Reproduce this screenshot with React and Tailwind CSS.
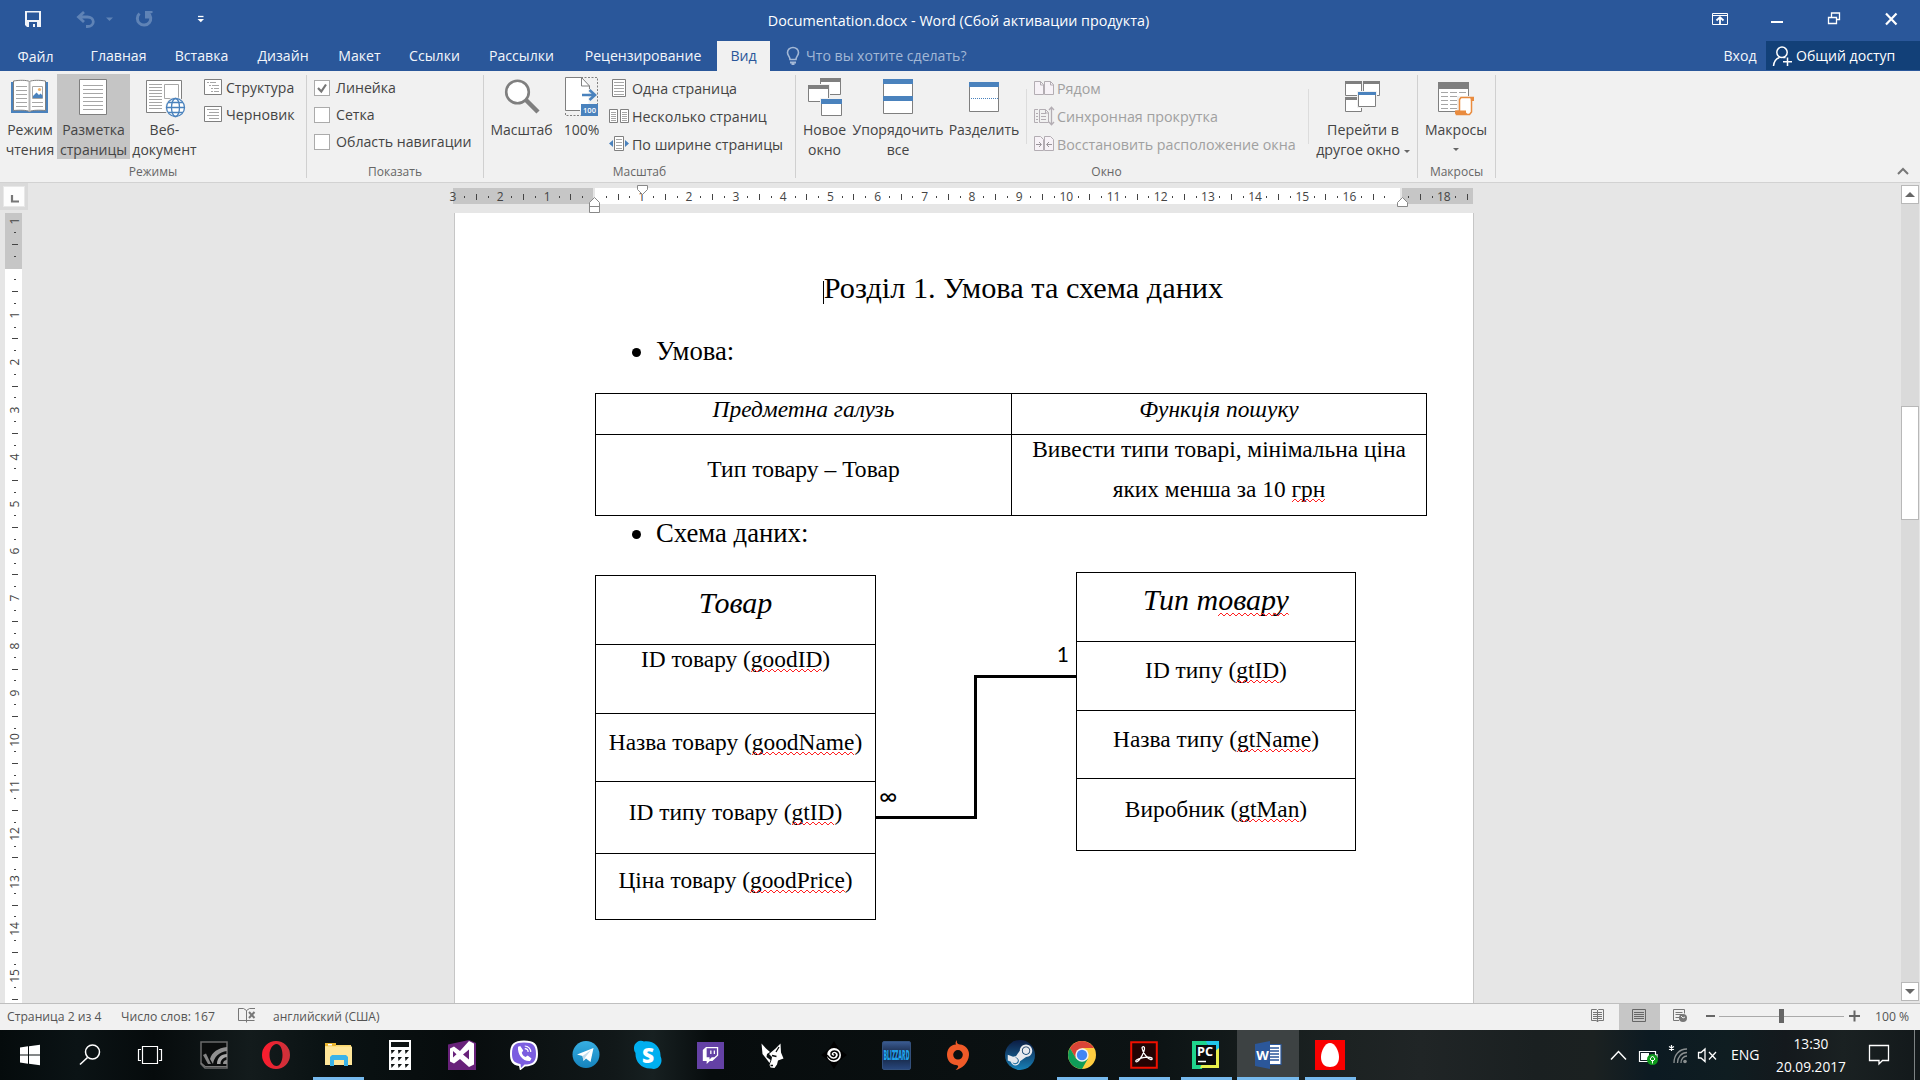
import React from 'react';
import { FaTwitch, FaSteamSymbol } from 'react-icons/fa';

/* ---------- shared helpers ---------- */

function Icon({ box, className = '', children }) {
  const [, , w, h] = box.split(' ');
  return (
    <svg width={w} height={h} viewBox={box} fill="none" className={`block shrink-0 ${className}`}>
      {children}
    </svg>
  );
}

const GRAY = '#7f7f7f';
const BLUE = '#4a82bd';

function Lines({ x1, x2, ys, color = '#a6a6a6' }) {
  return ys.map((y) => <path key={y} d={`M${x1} ${y}.5H${x2}`} stroke={color} />);
}

/* ---------- title bar ---------- */

function TitleBar() {
  return (
    <div className="flex h-[41px] items-stretch text-white">
      <div className="flex w-[759px] shrink-0">
        <Icon box="0 0 60 41">
          <path d="M25 11h16v16H27l-2-2z" fill="#f1f4f9" />
          <path d="M27 12.500h12v7.500H27z" fill="#2a579a" />
          <path d="M29 22h8v5h-2v-3h-2v3h-4z" fill="#2a579a" />
        </Icon>
        <Icon box="60 0 60 41">
          <path d="M84 12l-5.500 5 5.500 5M79 17h8.500a5.500 4.500 0 0 1 0 9.500H86" stroke="#5f83b6" strokeWidth="2.800" />
          <path d="M106 17.500h7l-3.500 3.500z" fill="#5f83b6" />
        </Icon>
        <Icon box="120 0 60 41">
          <path d="M139.500 13.500a6.700 6.700 0 1 0 8.500 -.5" stroke="#5f83b6" strokeWidth="3" />
          <path d="M145 11h7.500v2l-3 .5.500 5h-5z" fill="#5f83b6" />
        </Icon>
        <Icon box="180 0 40 41">
          <path d="M198 16.500h5.500" stroke="#fff" strokeWidth="1.300" />
          <path d="M197.500 19h6.500l-3.200 3.300z" fill="#fff" />
        </Icon>
      </div>
      <div className="w-[399px] shrink-0 whitespace-nowrap text-center text-[14.33px] leading-[41px]">
        Documentation.docx - Word (Сбой активации продукта)
      </div>
      <div className="ml-auto flex">
        <Icon box="1691 0 57 41">
          <path d="M1712.500 13.500h15v11h-15zM1712.500 15.500h15" stroke="#fff" />
          <path d="M1720 17v7M1716.500 20.500l3.500-3.300 3.500 3.300" stroke="#fff" strokeWidth="1.800" />
        </Icon>
        <Icon box="1748 0 57 41">
          <path d="M1771 22h12" stroke="#fff" strokeWidth="2" />
        </Icon>
        <Icon box="1805 0 57 41">
          <path d="M1828.500 17.500h8v6h-8zM1831.500 17v-4h8v6.500h-3M1831.500 13h8.500M1828.500 17.500h8.500" stroke="#fff" strokeWidth="1.300" />
        </Icon>
        <Icon box="1862 0 58 41">
          <path d="M1886 13.500l10.500 11M1896.500 13.500l-10.500 11" stroke="#fff" strokeWidth="2.200" />
        </Icon>
      </div>
    </div>
  );
}

/* ---------- tabs ---------- */

const TABS = [
  ['Главная', 'w-[85px]'],
  ['Вставка', 'w-[81px]'],
  ['Дизайн', 'w-[82px]'],
  ['Макет', 'w-[71px]'],
  ['Ссылки', 'w-[79px]'],
  ['Рассылки', 'w-[95px]'],
  ['Рецензирование', 'w-[148px]'],
];

function Tabs() {
  return (
    <div className="flex h-[30px] whitespace-nowrap text-center text-[14.1px] leading-[29px] text-[#f3f6fa]">
      <div className="mr-[5px] w-[71px] leading-[31px]">Файл</div>
      {TABS.map(([t, w]) => (
        <div key={t} className={w}>{t}</div>
      ))}
      <div className="w-[53px] bg-[#f1f1f1] text-[#2a579a]">Вид</div>
      <div className="flex pl-[14px] text-[#a3b8d6]">
        <Icon box="784 41 22 30">
          <path d="M790 59.500c0-3-2.500-3.800-2.500-7a5.500 5 0 0 1 11 0c0 3.200-2.500 4-2.500 7z" stroke="#a3b8d6" strokeWidth="1.600" />
          <path d="M790 61.500h6v2h-1.500v1.500h-3v-1.500h-1.500z" fill="#a3b8d6" />
        </Icon>
        <span>Что вы хотите сделать?</span>
      </div>
      <div className="ml-auto w-[52px]">Вход</div>
      <div className="flex h-[29px] w-[154px] bg-[#124078] text-white">
        <Icon box="1766 41 30 29">
          <circle cx="1782" cy="52.300" r="5.200" stroke="#fff" strokeWidth="1.500" />
          <path d="M1773.500 66c.5-5 3-7.500 6-8.500M1783 57.500h2.500M1787.500 57.500v8.500M1783 61.800h9" stroke="#fff" strokeWidth="1.500" />
        </Icon>
        <span>Общий доступ</span>
      </div>
    </div>
  );
}

/* ---------- ribbon ---------- */

function Group({ label, width, children }) {
  return (
    <div className={`flex shrink-0 ${width}`}>
      <div className="flex min-w-0 grow flex-col">
        <div className="flex h-[92px]">{children}</div>
        <div className="text-center text-[12px] leading-5 text-[#666]">{label}</div>
      </div>
      <div className="mt-1 h-[103px] w-px bg-[#d0d0d0]" />
    </div>
  );
}

function Big({ width, icon, lines, className = '' }) {
  return (
    <div className={`flex shrink-0 flex-col items-center whitespace-nowrap text-center leading-5 ${width} ${className}`}>
      {icon}
      <div className="mt-px">
        {lines.map((l, i) => (
          <div key={i}>{l}</div>
        ))}
      </div>
    </div>
  );
}

function Small({ icon, children, className = '' }) {
  return (
    <div className={`flex whitespace-nowrap ${className}`}>
      {icon}
      <span>{children}</span>
    </div>
  );
}

const Caret = () => (
  <svg width="6" height="3" viewBox="0 0 6 3" className="inline-block align-middle">
    <path d="M0 0h6L3 3z" fill="#666" />
  </svg>
);

function ReadIcon() {
  return (
    <Icon box="6 71 48 48">
      <path d="M11 82h37v31H11z" fill={BLUE} />
      <path d="M13.500 81c6-1 13-1 16 .5 3-1.500 10-1.500 16-.5v29.500c-6-.5-13-.5-16 1-3-1.500-10-1.500-16-1z" fill="#fff" stroke={GRAY} />
      <path d="M29.500 81.500v30" stroke="#b5b5b5" strokeWidth="2" />
      <Lines x1={16} x2={27} ys={[86, 90, 94, 98, 102, 106]} />
      <Lines x1={32} x2={43} ys={[102, 106]} />
      <path d="M32.500 86.500h10v12h-10z" fill="#fff" stroke="#a6a6a6" />
      <path d="M33 98v-2l3.500-3.500 2.500 2.500 1.500-1.500 2 2V98z" fill={BLUE} />
      <circle cx="39.500" cy="89.500" r="1.600" fill="#f0b26b" />
    </Icon>
  );
}

function PageIcon() {
  return (
    <Icon box="70 71 47 48">
      <path d="M79.500 79.500h27v35h-27z" fill="#fff" stroke={GRAY} />
      <Lines x1={83} x2={103} ys={[85, 89, 93, 97, 101, 105, 109]} />
    </Icon>
  );
}

function WebIcon() {
  return (
    <Icon box="141 71 47 48">
      <path d="M146.500 80.500h35v32h-35z" fill="#fff" stroke={GRAY} />
      <Lines x1={149} x2={162} ys={[84, 87, 90, 93, 96, 99, 102, 105, 108]} />
      <path d="M164.500 84.500h14v14h-14z" fill="#fff" stroke="#a6a6a6" />
      <circle cx="175.500" cy="107.500" r="10.500" fill="#f1f1f1" />
      <g stroke={BLUE} strokeWidth="1.300">
        <circle cx="175.500" cy="107.500" r="9" fill="#fff" />
        <ellipse cx="175.500" cy="107.500" rx="4" ry="9" />
        <path d="M166.500 107.500h18M168 102.500h15M168 112.500h15" />
      </g>
    </Icon>
  );
}

function MagnifierIcon() {
  return (
    <Icon box="498 71 47 48">
      <path d="M526 100l12 12" stroke={GRAY} strokeWidth="4.500" />
      <circle cx="517.500" cy="92" r="11.300" fill="#fff" stroke={GRAY} strokeWidth="2.600" />
    </Icon>
  );
}

function HundredIcon() {
  return (
    <Icon box="559 71 45 48">
      <path d="M581 77.500h16.500V104M565.500 113v2.500H581" stroke={GRAY} strokeDasharray="2 1.500" />
      <path d="M565.500 77.500h16l7 8v25h-23z" fill="#fff" />
      <path d="M580 110.500h-14.500v-33h16l8 8.500v3M581.500 77.500v8.500h8" stroke={GRAY} />
      <path d="M582 95h12M589.500 90l5.500 5-5.500 5" stroke={BLUE} strokeWidth="2.600" />
      <path d="M581 104h17v12h-17z" fill={BLUE} />
      <text x="589.500" y="112.700" textAnchor="middle" fontSize="7.500" fontWeight="600" fill="#fff">100</text>
    </Icon>
  );
}

function Win({ x, y, w, h, c = GRAY, bar = 3 }) {
  return (
    <g>
      <path d={`M${x - 1} ${y - 1}h${w + 2}v${h + 2}h${-w - 2}z`} fill="#f1f1f1" />
      <path d={`M${x + 0.5} ${y + 0.5}h${w - 1}v${h - 1}h${1 - w}z`} fill="#fff" stroke={GRAY} />
      <path d={`M${x} ${y}h${w}v${bar}h${-w}z`} fill={c} />
    </g>
  );
}

const NewWindowIcon = () => (
  <Icon box="801 71 47 48">
    <Win x={820} y={78} w={21} h={17} bar={4} />
    <Win x={808} y={85} w={21} h={17} bar={4} />
    <Win x={821} y={99} w={21} h={17} c={BLUE} bar={5} />
  </Icon>
);

const ArrangeIcon = () => (
  <Icon box="874 71 48 48">
    <Win x={883} y={79} w={30} h={18} c={BLUE} bar={5} />
    <path d="M883.500 97v16.500h29V97" fill="#fff" stroke={GRAY} />
    <path d="M883 96h30v5h-30z" fill={BLUE} />
  </Icon>
);

const SplitIcon = () => (
  <Icon box="960 71 48 48">
    <Win x={969} y={82} w={30} h={30} c={BLUE} bar={5} />
    <path d="M971 98.500h27" stroke={BLUE} strokeDasharray="1 1" />
  </Icon>
);

const SwitchIcon = () => (
  <Icon box="1339 71 48 48">
    <Win x={1345} y={81} w={17} h={15} />
    <Win x={1363} y={81} w={17} h={15} />
    <Win x={1345} y={97} w={17} h={15} />
    <Win x={1358} y={92} w={18} h={15} c={BLUE} />
  </Icon>
);

const MacroIcon = () => (
  <Icon box="1433 71 47 48">
    <Win x={1438} y={82} w={31} h={30} bar={7} />
    <g stroke="#a6a6a6">
      {[92, 96, 100, 104, 108].map((y) => (
        <path key={y} d={`M1441 ${y}.5h7M1450 ${y}.5h7M1459 ${y}.5h7`} />
      ))}
    </g>
    <path d="M1457 96h18v20h-20v-6h2z" fill="#f1f1f1" />
    <path d="M1459.500 111V99.500l1.500-2h12l-1.500 3V112l-2 2.500h-13v-3z" fill="#fff" stroke="#e98b3e" strokeWidth="1.500" />
    <path d="M1455 110.500h11v2l2.500 2.500h-12l-1.500-1.500zM1470 97h4v4h-3z" fill="#e98b3e" />
  </Icon>
);

function OutlineIcon({ draft }) {
  return (
    <Icon box="204 73 22 27">
      <path d="M204.500 79.500h17v15h-17z" fill="#fff" stroke={GRAY} />
      {draft ? (
        <g>
          <Lines x1={207} x2={219} ys={[82, 88]} />
          <Lines x1={209} x2={219} ys={[85, 91]} />
        </g>
      ) : (
        <path d="M207 82.500h2M210 82.500h6M209 85.500h2M212 85.500h7M211 88.500h2M214 88.500h5M211 91.500h2M214 91.500h5" stroke="#a6a6a6" />
      )}
    </Icon>
  );
}

function Check({ on, children }) {
  return (
    <div className="flex items-center whitespace-nowrap text-[14.15px] leading-[27px]">
      <div className="mr-1.5 h-4 w-4 border border-[#ababab] bg-white">
        {on && (
          <svg width="14" height="14" viewBox="0 0 14 14" fill="none" className="block">
            <path d="M3 7l3.300 3.500L11 3.500" stroke="#777" strokeWidth="2.200" />
          </svg>
        )}
      </div>
      <span>{children}</span>
    </div>
  );
}

const OnePageIcon = () => (
  <Icon box="609 74 23 28">
    <path d="M612.500 79.500h13v17h-13z" fill="#fff" stroke={GRAY} />
    <Lines x1={614} x2={624} ys={[82, 85, 88, 91, 94]} />
  </Icon>
);
const MultiPageIcon = () => (
  <Icon box="609 102 23 28">
    <path d="M609.500 109.500h8v13h-8zM620.500 109.500h8v13h-8z" fill="#fff" stroke={GRAY} />
    <Lines x1={611} x2={616} ys={[112, 114, 116, 118, 120]} />
    <Lines x1={622} x2={627} ys={[112, 114, 116, 118, 120]} />
  </Icon>
);
const WidthIcon = () => (
  <Icon box="609 130 23 28">
    <path d="M614.500 136.500h9v14h-9z" fill="#fff" stroke={GRAY} />
    <Lines x1={616} x2={622} ys={[139, 142, 145, 148]} />
    <path d="M609 143.500l4-3.500v7zM629 143.500l-4-3.500v7z" fill={BLUE} />
  </Icon>
);
const DIM = '#b3adb3';
const SideIcon = () => (
  <Icon box="1034 74 23 28">
    <path d="M1034.500 81.500h6l3 3v10h-9zM1044.500 81.500h6l3 3v10h-9z" fill="#f7f2f7" stroke={DIM} />
    <path d="M1040.500 81.500v3.500h3M1050.500 81.500v3.500h3" stroke={DIM} />
  </Icon>
);
const SyncIcon = () => (
  <Icon box="1034 102 23 28">
    <path d="M1038 109.500h-3.500v13h3.500M1039.500 109.500h6l3 3v10h-9zM1045.500 109.500v3.500h3" stroke={DIM} />
    <Lines x1={1036} x2={1038} ys={[113, 116, 119]} color={DIM} />
    <Lines x1={1041} x2={1046} ys={[113, 116, 119]} color={DIM} />
    <path d="M1051.500 107.500v17M1049 110l2.500-2.700 2.500 2.700M1049 122l2.500 2.700 2.500-2.700" stroke={DIM} strokeWidth="1.300" />
  </Icon>
);
const ResetIcon = () => (
  <Icon box="1034 130 23 28">
    <path d="M1034.500 136.500h6l3 3v11h-9zM1044.500 136.500h6l3 3v11h-9z" fill="#f7f2f7" stroke={DIM} />
    <path d="M1036 144.500h5M1039 142l2.500 2.500-2.500 2.500M1052 144.500h-5M1049 142l-2.500 2.500 2.500 2.500" stroke="#9a959a" />
  </Icon>
);

function Ribbon() {
  return (
    <div className="flex h-[112px] border-b border-[#d2d2d2] bg-[#f1f1f1] text-[14px] text-[#444]">
      <Group label="Режимы" width="w-[307px]">
        <Big width="w-[57px]" className="pl-[3px]" icon={<ReadIcon />} lines={['Режим', 'чтения']} />
        <div className="mt-[3px] h-[85px] w-[73px] bg-[#c5c5c5]">
          <Big width="w-[73px]" className="-mt-[3px]" icon={<PageIcon />} lines={['Разметка', 'страницы']} />
        </div>
        <Big width="w-[69px]" icon={<WebIcon />} lines={['Веб-', 'документ']} />
        <div className="pl-[5px] pt-[2px] leading-[29px]">
          <Small className="h-[27px]" icon={<OutlineIcon />}>Структура</Small>
          <Small className="h-[27px] text-[14.2px]" icon={<OutlineIcon draft />}>Черновик</Small>
        </div>
      </Group>

      <Group label="Показать" width="w-[177px]">
        <div className="pl-[7px] pt-[3px]">
          <Check on>Линейка</Check>
          <Check>Сетка</Check>
          <Check>Область навигации</Check>
        </div>
      </Group>

      <Group label="Масштаб" width="w-[312px]">
        <Big width="w-[75px]" icon={<MagnifierIcon />} lines={['Масштаб']} />
        <Big width="w-[45px]" icon={<HundredIcon />} lines={['100%']} />
        <div className="pl-[5px] pt-[3px] text-[14.25px] leading-[29px]">
          <Small className="h-7" icon={<OnePageIcon />}>Одна страница</Small>
          <Small className="h-7" icon={<MultiPageIcon />}>Несколько страниц</Small>
          <Small className="h-7" icon={<WidthIcon />}>По ширине страницы</Small>
        </div>
      </Group>

      <Group label="Окно" width="w-[622px]">
        <Big width="w-[55px]" className="ml-px" icon={<NewWindowIcon />} lines={['Новое', 'окно']} />
        <Big width="w-[92px]" icon={<ArrangeIcon />} lines={['Упорядочить', 'все']} />
        <Big width="w-[80px]" icon={<SplitIcon />} lines={['Разделить']} />
        <div className="ml-[2px] mt-[18px] h-[55px] w-px bg-[#dcdcdc]" />
        <div className="pl-[7px] pt-[3px] text-[14.27px] leading-[29px] text-[#a0a0a0]">
          <Small className="h-7" icon={<SideIcon />}>Рядом</Small>
          <Small className="h-7" icon={<SyncIcon />}>Синхронная прокрутка</Small>
          <Small className="h-7" icon={<ResetIcon />}>Восстановить расположение окна</Small>
        </div>
        <div className="ml-auto mt-[18px] h-[55px] w-px bg-[#dcdcdc]" />
        <Big
          width="w-[108px]"
          className="text-[14.25px]"
          icon={<SwitchIcon />}
          lines={['Перейти в', <span key="o">другое окно <Caret /></span>]}
        />
      </Group>

      <Group label="Макросы" width="w-[78px]">
        <Big width="w-[76px]" icon={<MacroIcon />} lines={['Макросы', <div key="c" className="-mt-[2px]"><Caret /></div>]} />
      </Group>

      <svg width="12" height="8" viewBox="0 0 12 8" fill="none" className="ml-auto mr-[11px] mt-[96px]">
        <path d="M1 7l5-5 5 5" stroke="#777" strokeWidth="2" />
      </svg>
    </div>
  );
}

/* ---------- rulers ---------- */

function HCells({ from, to }) {
  const out = [];
  for (let n = from; n <= to; n++) {
    out.push(
      <div key={n} className="grid w-[47.2px] shrink-0 grid-cols-4 items-center justify-items-center">
        <span className="flex w-0 justify-center">{n === 0 || n === 17 ? '' : Math.abs(n)}</span>
        <i className="h-[2px] w-px bg-[#444]" />
        <i className="h-[6px] w-px bg-[#444]" />
        <i className="h-[2px] w-px bg-[#444]" />
      </div>
    );
  }
  return out;
}

function HRuler() {
  return (
    <div className="relative ml-[430px] mt-[5px] h-4 w-[1020px]">
      <div className="flex h-4">
        <div className="w-[140px] bg-[#c6c6c6]" />
        <div className="ml-[2px] w-[805px] bg-white" />
        <div className="ml-[2px] grow bg-[#c6c6c6]" />
      </div>
      <div className="absolute -left-[6px] top-0 flex h-[17px] w-[1026px] overflow-hidden text-[12px] leading-[17px] text-[#444]">
        <HCells from={-3} to={18} />
      </div>
      <svg width="12" height="12" viewBox="0 0 12 12" className="absolute left-[184px] -top-[4px]">
        <path d="M.5 1.500h10v4l-5 5-5-5z" fill="#fff" stroke="#888" />
      </svg>
      <svg width="12" height="17" viewBox="0 0 12 17" className="absolute left-[136px] top-[9px]">
        <path d="M.5 5.500l5-5 5 5v10H.5zM.5 9.500h10" fill="#fff" stroke="#888" />
      </svg>
      <svg width="12" height="11" viewBox="0 0 12 11" className="absolute left-[944px] top-[9px]">
        <path d="M.5 5.500l5-5 5 5v4H.5z" fill="#fff" stroke="#888" />
      </svg>
    </div>
  );
}

function VRuler() {
  const ns = Array.from({ length: 17 }, (_, i) => i - 1);
  return (
    <div className="relative ml-[5px] h-[790px] w-[17px] overflow-hidden bg-white">
      <div className="h-14 bg-[#c6c6c6]" />
      <div className="absolute left-0 top-[2px] w-[19px] text-[12px] text-[#444]">
        {ns.map((n) => (
          <div key={n} className="grid h-[47.2px] grid-rows-4 items-center justify-items-center">
            <span className="flex h-0 w-0 -rotate-90 items-center justify-center">{n === 0 ? '' : Math.abs(n)}</span>
            <i className="h-px w-[2px] bg-[#444]" />
            <i className="h-px w-[6px] bg-[#444]" />
            <i className="h-px w-[2px] bg-[#444]" />
          </div>
        ))}
      </div>
    </div>
  );
}

/* ---------- document ---------- */

/* A word with a red zigzag under it. */
function Err({ children }) {
  const id = React.useId();
  return (
    <span className="relative inline-block leading-none">
      {children}
      <svg height="5" className="absolute -bottom-[2px] left-0 w-full">
        <defs>
          <pattern id={id} width="6" height="5" patternUnits="userSpaceOnUse">
            <path d="M0 4l3-3 3 3" fill="none" stroke="#f22" />
          </pattern>
        </defs>
        <rect width="100%" height="5" fill={`url(#${id})`} />
      </svg>
    </span>
  );
}

function Entity({ className, rows }) {
  return (
    <div className={`shrink-0 border-x border-t border-black text-center ${className}`}>
      {rows.map(([cls, body], i) => (
        <div key={i} className={`whitespace-nowrap border-b border-black ${cls}`}>{body}</div>
      ))}
    </div>
  );
}

function Bullet({ children, className }) {
  return (
    <div className={`flex items-center pl-[37px] text-[26.7px] ${className}`}>
      <span className="mr-[15px] mt-0.5 h-[9px] w-[9px] rounded-full bg-black" />
      {children}
    </div>
  );
}

function Page() {
  return (
    <div className="ml-[431px] h-[790px] w-[1020px] border-x border-[#c6c6c6] bg-white pl-[140px] pt-[55px] font-['Liberation_Serif',serif] text-[23.4px] text-black">
      <div className="relative ml-12 w-[761px] text-center text-[30.3px] leading-10">
        <span className="absolute left-[180px] top-[13px] h-[23px] w-px bg-black" />
        Розділ 1. Умова та схема даних
      </div>
      <Bullet className="mt-[20px] h-[46px]">Умова:</Bullet>

      <div className="mt-[19px] grid h-[123px] w-[832px] grid-cols-[416px_414px] grid-rows-[41px_80px] border border-black text-center">
        <div className="border-b border-r border-black italic leading-[31px]">Предметна галузь</div>
        <div className="border-b border-black italic leading-[31px]">Функція пошуку</div>
        <div className="border-r border-black text-[23.6px] leading-[68px]">Тип товару – Товар</div>
        <div className="whitespace-nowrap leading-10">
          <div className="-mt-1.5">Вивести типи товарі, мінімальна ціна</div>
          <div>яких менша за 10 <Err>грн</Err></div>
        </div>
      </div>
      <Bullet className="h-[34px]">Схема даних:</Bullet>

      <div className="flex">
        <Entity
          className="mt-[25px] w-[281px] self-start"
          rows={[
            ['h-[69px] text-[30px] italic leading-[53px]', 'Товар'],
            ['h-[69px] leading-[28px]', <>ID товару (<Err>goodID</Err>)</>],
            ['h-[68px] leading-[57px]', <>Назва товару (<Err>goodName</Err>)</>],
            ['h-[72px] leading-[60px]', <>ID типу товару (<Err>gtID</Err>)</>],
            ['h-[66px] leading-[52px]', <>Ціна товару (<Err>goodPrice</Err>)</>],
          ]}
        />
        <div className="relative w-[200px] shrink-0 font-[Lato,sans-serif] leading-6">
          <svg width="200" height="298" viewBox="0 2 200 298" fill="none" className="block">
            <path d="M0 269.500h99.500v-141H200" stroke="#000" strokeWidth="3" />
          </svg>
          <span className="absolute right-[7px] top-[92px] text-[21px]">1</span>
          <span className="absolute left-[3px] top-[233px] text-[25px]">∞</span>
        </div>
        <Entity
          className="mt-[22px] w-[280px] self-start"
          rows={[
            ['h-[69px] text-[30px] italic leading-[54px]', <>Тип т<Err>овару</Err></>],
            ['h-[69px] leading-[56px]', <>ID типу (<Err>gtID</Err>)</>],
            ['h-[68px] leading-[56px]', <>Назва типу (<Err>gtName</Err>)</>],
            ['h-[72px] leading-[60px]', <>Виробник (<Err>gtMan</Err>)</>],
          ]}
        />
      </div>
    </div>
  );
}

function ScrollBar() {
  return (
    <div className="ml-auto mr-px mt-[2px] flex h-[816px] w-[18px] flex-col bg-[#dadada]">
      <div className="grid h-[19px] place-items-center border border-[#b8b8b8] bg-white">
        <svg width="10" height="5" viewBox="0 0 10 5"><path d="M5 0l5 5H0z" fill="#666" /></svg>
      </div>
      <div className="mt-[202px] h-[114px] border border-[#b8b8b8] bg-white" />
      <div className="mt-auto grid h-[19px] place-items-center border border-[#b8b8b8] bg-white">
        <svg width="10" height="5" viewBox="0 0 10 5"><path d="M5 5l5-5H0z" fill="#666" /></svg>
      </div>
    </div>
  );
}

function Workspace() {
  return (
    <div className="flex h-[820px] bg-[#e6e6e6]">
      <div className="w-[23px] shrink-0">
        <div className="h-[27px] w-[28px] bg-[#dadada] pl-[3px] pt-[3px]">
          <div className="h-[21px] w-[22px] border border-[#e8e8e8] bg-[#fdfdfd]">
            <svg width="20" height="19" viewBox="0 0 20 19" fill="none">
              <path d="M8 8v6.500h7" stroke="#777" strokeWidth="2.200" />
            </svg>
          </div>
        </div>
        <div className="mt-[3px]"><VRuler /></div>
      </div>
      <div className="w-[1475px] shrink-0">
        <HRuler />
        <div className="mt-[9px]"><Page /></div>
      </div>
      <ScrollBar />
    </div>
  );
}

/* ---------- status bar ---------- */

function StatusBar() {
  return (
    <div className="flex h-[27px] whitespace-nowrap border-t border-[#bfbfbf] bg-[#f1f1f1] text-[12.2px] leading-[25px] text-[#555]">
      <span className="w-[114px] pl-[7px]">Страница 2 из 4</span>
      <span className="w-[124px] pl-[7px]">Число слов: 167</span>
      <Icon box="238 1004 35 26">
        <path d="M246.500 1020.500h-8v-12h5l3 2v12M246.500 1010.500l3-2h5.500M246.500 1020.500h8" stroke="#777" />
        <path d="M249 1012l5.500 6M254.500 1012l-5.500 6" stroke="#777" strokeWidth="2" />
      </Icon>
      <span className="text-[12px]">английский (США)</span>
      <div className="ml-auto flex">
        <Icon box="1577 1004 42 26">
          <path d="M1591.500 1009.500h5l1 1 1-1h5v11h-5l-1 1.500-1-1.500h-5zM1597.500 1010v12" stroke="#777" />
          <path d="M1593 1012.500h9M1593 1014.500h9M1593 1016.500h9M1593 1018.500h9" stroke="#777" />
        </Icon>
        <div className="w-[41px] bg-[#c6c6c6]">
          <Icon box="1619 1004 41 26">
            <path d="M1632.500 1009.500h13v12h-13z" stroke="#666" />
            <path d="M1634 1012.500h10M1634 1014.500h10M1634 1016.500h10M1634 1018.500h10" stroke="#666" />
          </Icon>
        </div>
        <Icon box="1660 1004 44 26">
          <path d="M1679 1020.500h-5.500v-11h11v4M1675.500 1012.500h7M1675.500 1014.500h7M1675.500 1017.500h4" stroke="#777" />
          <circle cx="1683" cy="1018" r="4" fill="#777" />
          <path d="M1681 1016l2 2 2-1" stroke="#eee" />
        </Icon>
        <Icon box="1704 1004 171 26">
          <path d="M1706 1016h9M1849 1016h11M1854.500 1010.500v11" stroke="#666" strokeWidth="2" />
          <path d="M1719 1016.500h125" stroke="#aaa" />
          <path d="M1779 1009h5v14h-5z" fill="#666" />
        </Icon>
        <span className="w-[45px]">100 %</span>
      </div>
    </div>
  );
}

/* ---------- taskbar ---------- */

const Nvidia = () => (
  <Icon box="0 0 30 30">
    <path d="M2 2h26v26H6l-4-4z" fill="#0b0d0d" stroke="#6b6b6b" strokeWidth="1.500" />
    <path d="M2 23l4 3.500h22" stroke="#777" strokeWidth="1.200" />
    <path d="M28 7C19 8 13 12 11 19l3 5c1-7 6-12 14-13z" fill="#8f8f8f" />
    <path d="M28 14c-6 0-10 4-10 10h3.500c0-4 2.500-6.500 6.500-7z" fill="#a5a5a5" />
    <path d="M24 24c0-2.500 1.500-4 4-4v4z" fill="#8f8f8f" />
    <path d="M4 15l3-1.500 5 10.500H9z" fill="#858585" />
  </Icon>
);
const Opera = () => (
  <Icon box="0 0 30 30">
    <defs>
      <linearGradient id="op" x1="0" x2="1"><stop stopColor="#ff1b2d" /><stop offset="1" stopColor="#c8333b" /></linearGradient>
    </defs>
    <path fillRule="evenodd" fill="url(#op)" d="M15 1a14 14 0 1 0 0 28 14 14 0 0 0 0-28zM15.500 4c3.800 0 6 5 6 11s-2.200 11-6 11-7-5-7-11 3.200-11 7-11z" />
  </Icon>
);
const Explorer = () => (
  <Icon box="0 0 30 30">
    <path d="M2 3h9l2 2h15v20H2z" fill="#f9d66c" />
    <path d="M2 6.500h27V25H2z" fill="#ffe699" />
    <path d="M2 3h11v3H2z" fill="#e9b52e" />
    <path d="M5 4h4v1.500H5z" fill="#fff" />
    <path d="M7 26V17l2-2h14l2 2v9h-4v-6h-10v6z" fill="#39b3e9" />
  </Icon>
);
const Calc = () => (
  <Icon box="0 0 30 30">
    <path d="M4 0h22v30H4z" fill="#fff" />
    <path d="M6 2h18v5H6z" fill="#101414" />
    {[10, 17, 24].map((y) => [6, 13, 20].map((x) => <path key={`${x}-${y}`} d={`M${x} ${y}h4l-3.500 4z`} fill="#101414" />))}
  </Icon>
);
const VStudio = () => (
  <Icon box="0 0 30 30">
    <path d="M1 4.500L22 0l7 3v27H1z" fill="#68217a" />
    <path fillRule="evenodd" fill="#fff" d="M22 1l5 2.500v21L22 27l-9-8-6 4.500-4-2v-13l4-2 6 4.500zM22 9.500l-6 5 6 5zM6 11v6.500l3.500-3.300z" />
  </Icon>
);
const Viber = () => (
  <Icon box="0 0 30 30">
    <path d="M15 .5c10 0 14 3 14 13.500 0 9-4 12-13 12.500l-5 4-1-4.500C3 25 1 21 1 14 1 4 5 .5 15 .5z" fill="#fff" />
    <path d="M15 2.500c9 0 12 2.500 12 11.500 0 8-3.500 10.500-11.500 10.500L12 28l-.5-4C5 23 3 20 3 14 3 5 6 2.500 15 2.500z" fill="#7b5de0" />
    <svg x="6" y="4.500" width="18" height="18" viewBox="0 0 24 24">
      <path d="M4 3l3-1 4 6-2 3c1 3 2.500 4.500 5 5.500l3-2 5 4-2 3.500c-9 1-17-8-16-19z" fill="#fff" />
      <path d="M13 2c5 0 8 4 8 8M13 5.500c3 0 4.500 2 4.500 4.500" fill="none" stroke="#fff" strokeWidth="1.600" />
    </svg>
  </Icon>
);
const Telegram = () => (
  <Icon box="0 0 30 30">
    <defs><linearGradient id="tg" x2="0" y2="1"><stop stopColor="#37aee2" /><stop offset="1" stopColor="#1583bd" /></linearGradient></defs>
    <circle cx="15" cy="14.500" r="13.500" fill="url(#tg)" />
    <path d="M6 14.500L22.500 8 19.500 22l-4.500-3.500-2.500 2.500-1-5z" fill="#fff" />
    <path d="M11.500 16L20 10l-5.500 7-2 4z" fill="#c3dcec" />
  </Icon>
);
const Skype = () => (
  <Icon box="0 0 30 30">
    <path d="M1 8a7 7 0 0 1 10-6.500C20 0 28 7 27.500 16 31 23 25 31 18 28.500 8 29 2 21 2.500 13A7 7 0 0 1 1 8z" fill="#00aff0" />
    <text x="15" y="22.500" textAnchor="middle" fontSize="21" fontWeight="800" fill="#fff">S</text>
  </Icon>
);
const Twitch = () => (
  <div className="grid h-[27px] w-[27px] place-items-center bg-[#6441a5] text-[17px] text-white"><FaTwitch /></div>
);
const Wolf = () => (
  <Icon box="0 0 30 30">
    <path d="M4.500 3.500l4.500 5 4 3.500-3 2-.5 3 4 3-1 3-3-4-4-5z" fill="#fff" />
    <path d="M23.500 3.500l.5 9 2.500 6-5.500 2-1 4-2.500 3.500-4-.5-1-2.500 2-5 .5-3-3-3 6-5z" fill="#fff" />
    <path d="M15 15.500l4.500 1M22 7l-3 5M13.500 25.500h2.500" stroke="#0a0d0d" strokeWidth="1.300" />
  </Icon>
);
const Spiral = () => (
  <Icon box="0 0 30 30">
    <path d="M15 1l5 8 8 6-8 6-5 8-5-8-8-6 8-6z" fill="#000" />
    <circle cx="15" cy="15" r="7" fill="#fff" />
    <path d="M8 15c3 3 3 5 7 4.500 5-.5 6-6 2.500-8-3-1.500-6 .5-5.500 3 .5 2 3 2.500 4 1 .5-1-.2-2-1.500-1.500" stroke="#000" strokeWidth="1.500" />
  </Icon>
);
const Blizzard = () => (
  <div className="grid h-[29px] w-[29px] place-items-center rounded-[2px] border border-[#33507c] bg-gradient-to-b from-[#3a5a90] via-[#14233f] to-[#28477c]">
    <svg width="27" height="24" viewBox="0 0 27 24">
      <text x="0.5" y="17" textLength="26" lengthAdjust="spacingAndGlyphs" fontSize="14" fontWeight="800" fill="#1fa3ec">BLIZZARD</text>
    </svg>
  </div>
);
const Origin = () => (
  <Icon box="0 0 30 30">
    <path fillRule="evenodd" fill="#f05a28" d="M14 0c-2 2-1.500 3.500-1 4.500C7 5 4 9.500 4 14.500 4 21 8 24.500 13 25c3 .5 3 2-.5 5 6-1 13-7 13.500-15C26.500 9 22 5 17 4.500c-3-.5-3.500-2-3-4.500zM15 10a4.800 4.800 0 1 1 0 9.600 4.800 4.800 0 0 1 0-9.600z" />
  </Icon>
);
const Steam = () => (
  <div className="grid h-[30px] w-[30px] place-items-center overflow-hidden rounded-full bg-gradient-to-b from-[#0b1c42] to-[#1682b8] text-[28px] text-[#e6e9ee]">
    <FaSteamSymbol />
  </div>
);
const Chrome = () => (
  <Icon box="0 0 30 30">
    <circle cx="15" cy="15" r="14" fill="#ffcd40" />
    <path d="M15 8h12.100A14 14 0 0 0 2.900 8L9 18.500z" fill="#db4437" />
    <path d="M2.900 8A14 14 0 0 0 15 29l6-10.500L15 21l-6-2.500z" fill="#0f9d58" />
    <circle cx="15" cy="15" r="6.700" fill="#f1f1f1" />
    <circle cx="15" cy="15" r="5.200" fill="#4285f4" />
  </Icon>
);
const Acrobat = () => (
  <Icon box="0 0 30 30">
    <path d="M2.200 2.200h25.600v25.600H2.200z" fill="#230303" stroke="#f01000" strokeWidth="2" />
    <path d="M13 8c0-2 3-2 2.500 1-.5 4-4 10-7 12.500-1.500 1-2.500-.5-1-1.500 3-2 10-3.500 14-2.500 2.500.5 2 2.500 0 2-3-1-7.500-6-8.500-11.500z" stroke="#fff" strokeWidth="1.300" />
  </Icon>
);
const PyCharm = () => (
  <Icon box="0 0 30 30">
    <path d="M1 1h16l-6 28H1z" fill="#1fd58d" />
    <path d="M15 1h13v10l-8 4z" fill="#21c6e8" />
    <path d="M28 8v20H9l4-8z" fill="#e9f04b" />
    <path d="M5 5h20v20H5z" fill="#0b0b0b" />
    <text x="6" y="16" fontSize="12" fontWeight="700" fill="#fff" textLength="16" lengthAdjust="spacingAndGlyphs">PC</text>
    <path d="M7 21.500h8" stroke="#fff" strokeWidth="1.500" />
  </Icon>
);
const WordIcon = () => (
  <Icon box="0 0 30 30">
    <path d="M15 4.500h13v20H15z" fill="#fff" stroke="#2b579a" strokeWidth="1.200" />
    <path d="M17 8h9M17 11h9M17 14h9M17 17h9M17 20h9" stroke="#2b579a" strokeWidth="1.300" />
    <path d="M2 4l15-3v28L2 26z" fill="#2b579a" />
    <text x="9.500" y="19.500" textAnchor="middle" fontSize="13" fontWeight="700" fill="#fff">W</text>
  </Icon>
);
const Egg = () => (
  <Icon box="0 0 30 30">
    <path d="M0 0h30v30H0z" fill="#fa0000" />
    <path d="M15 3c5 0 9 8 9 14 0 7-4 10-9 10s-9-3-9-10C6 11 10 3 15 3z" fill="#fff" />
  </Icon>
);

const APPS = [
  [Nvidia], [Opera], [Explorer, true], [Calc], [VStudio], [Viber], [Telegram], [Skype], [Twitch],
  [Wolf], [Spiral], [Blizzard], [Origin], [Steam], [Chrome, true], [Acrobat, true], [PyCharm, true],
  [WordIcon, true, true], [Egg, true],
];

function Taskbar() {
  return (
    <div className="flex h-[50px] bg-[linear-gradient(90deg,#050b0c_0%,#0b1315_4%,#060b0c_8%,#131b1c_13%,#0a1213_17%,#070c0d_24%,#111819_32%,#172021_34%,#070c0d_37%,#0a1011_50%,#0c1314_60%,#161d1d_66%,#1c2222_70%,#202526_74%,#1a2021_80%,#1b2121_83%,#0c1a22_86%,#0f1d21_90%,#14191d_93%,#1a2122_96%,#13191b_100%)]">
      <div className="flex w-[183px] shrink-0">
        <Icon box="0 1030 60 50">
          <path d="M20 1047.500l8-1.200v8.200h-8zM29 1046.200l11-1.500v9.800H29zM20 1055.500h8v8.200l-8-1.200zM29 1055.500h11v9.700l-11-1.500z" fill="#fff" />
        </Icon>
        <Icon box="60 1030 60 50">
          <circle cx="92.500" cy="1052" r="7" stroke="#fff" strokeWidth="1.500" />
          <path d="M87.500 1057.500l-7.500 7" stroke="#fff" strokeWidth="1.600" />
        </Icon>
        <Icon box="120 1030 60 50">
          <path d="M142.500 1046.500h15v17h-15zM141 1049.500h-2.500v11h2.500M159 1049.500h2.500v11H159" stroke="#fff" strokeWidth="1.200" />
        </Icon>
      </div>
      {APPS.map(([A, open, active], i) => (
        <div key={i} className={`flex h-[50px] w-[62px] shrink-0 flex-col items-center pt-[10px] ${active ? 'bg-[#3d4243]' : ''}`}>
          <div className="grid h-[30px] place-items-center"><A /></div>
          {open && <div className={`mt-auto h-[3px] bg-[#76b9ed] ${active ? 'w-[62px]' : 'w-[51px]'}`} />}
        </div>
      ))}
      <div className="ml-auto flex text-[13.7px] text-white">
        <Icon box="1604 1030 127 50">
          <path d="M1611 1059.500l7.500-8 7.500 8" stroke="#fff" strokeWidth="1.500" />
          <path d="M1639.500 1051.500h16v10h-16zM1657 1054v4" stroke="#fff" strokeWidth="1.200" />
          <path d="M1641 1053h8v7h-8z" fill="#fff" />
          <circle cx="1652.500" cy="1059.500" r="5.500" fill="#0e9a1c" />
          <path d="M1652.500 1056l2.500 3-2.500 2.500-2.500-2.500zM1652.500 1060v3.500" stroke="#fff" />
          <path d="M1674 1063c0-8 5-14 13-14M1677.500 1063c0-6 4-10.500 9.500-10.500M1681 1063c0-4 2.500-7 6-7" stroke="#8b9091" strokeWidth="1.300" />
          <circle cx="1685" cy="1061.500" r="1.800" fill="#8b9091" />
          <path d="M1671.500 1045v6M1669 1046.500l5 3M1674 1046.500l-5 3" stroke="#fff" strokeWidth="1.200" />
          <path d="M1698.500 1052.500h2.500l4-3.500v12.500l-4-3.500h-2.500zM1709 1052l7 7.500M1716 1052l-7 7.500" stroke="#fff" strokeWidth="1.300" />
        </Icon>
        <span className="w-[29px] text-[14px] leading-[50px]">ENG</span>
        <div className="flex w-[102px] flex-col pt-[2px] text-center leading-[23px]">
          <span>13:30</span>
          <span>20.09.2017</span>
        </div>
        <Icon box="1862 1030 52 50">
          <path d="M1869.500 1045.500h19v15h-6l-3.500 3.500v-3.500h-9.500z" stroke="#fff" strokeWidth="1.300" />
        </Icon>
        <div className="w-[6px] border-l border-[#7d8384]" />
      </div>
    </div>
  );
}

export default function App() {
  return (
    <div className="h-[1080px] w-[1920px] overflow-hidden bg-[#2a579a] font-['Open_Sans','Noto_Sans',sans-serif]">
      <TitleBar />
      <Tabs />
      <Ribbon />
      <Workspace />
      <StatusBar />
      <Taskbar />
    </div>
  );
}
